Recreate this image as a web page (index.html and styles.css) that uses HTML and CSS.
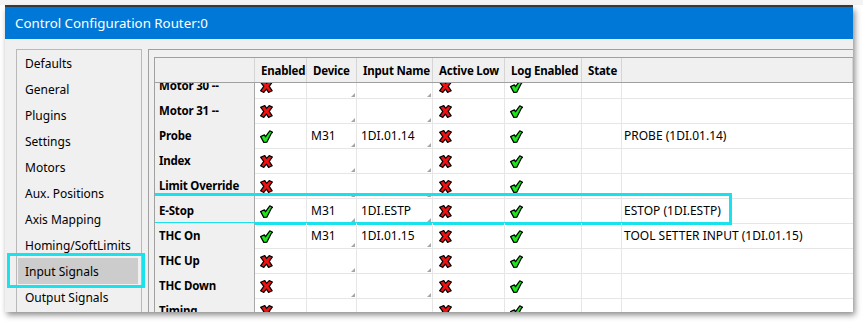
FILE: index.html
```html
<!DOCTYPE html>
<html lang="en">

<head>
   <meta charset="UTF-8">
   <title>Control Configuration Router:0</title>
   <link rel="stylesheet" href="styles.css">
</head>

<body>
   <svg class="defs" width="0" height="0">
      <defs>
         <symbol id="icon-no" viewBox="0 0 13 13">
            <path d="M0.6 2.2 L4.8 0.6 L6.6 3.4 L9.2 0.6 L12.4 2 L9.2 6.4 L12.2 10.8 L8.6 12.4 L6.4 9.2 L3.8 12.4 L0.6 10.8 L3.8 6.4 Z" fill="#ee1111" stroke="#000" stroke-width="1.2" stroke-linejoin="round"/>
         </symbol>
         <symbol id="icon-yes" viewBox="0 0 13 13">
            <path d="M0.6 6.6 L4.4 4.8 L5.4 6.8 L9.8 0.8 L12.6 2.2 L11.4 3.2 L6.8 12.2 L3.8 12.4 Z" fill="#1fe31f" stroke="#000" stroke-width="1.2" stroke-linejoin="round"/>
         </symbol>
      </defs>
   </svg>

   <div class="backdrop"></div>
   <div class="backdrop-edge"></div>

   <div class="window">
      <div class="title-bar">Control Configuration Router:0</div>

      <div class="content">
         <!-- left page list -->
         <ul class="nav">
            <li class="nav-item">Defaults</li>
            <li class="nav-item">General</li>
            <li class="nav-item">Plugins</li>
            <li class="nav-item">Settings</li>
            <li class="nav-item">Motors</li>
            <li class="nav-item">Aux. Positions</li>
            <li class="nav-item">Axis Mapping</li>
            <li class="nav-item">Homing/SoftLimits</li>
            <li class="nav-item selected">Input Signals</li>
            <li class="nav-item">Output Signals</li>
         </ul>

         <div class="panel">
            <div class="grid">
               <div class="grid-head">
                  <div class="hcell"></div>
                  <div class="hcell">Enabled</div>
                  <div class="hcell">Device</div>
                  <div class="hcell">Input Name</div>
                  <div class="hcell">Active Low</div>
                  <div class="hcell">Log Enabled</div>
                  <div class="hcell">State</div>
                  <div class="hcell"></div>
               </div>

               <div class="grid-body">
                  <div class="rows">
                     <div class="row">
                        <div class="rhead">Motor 30 --</div>
                        <div class="cell icon"><svg><use href="#icon-no"/></svg></div>
                        <div class="cell combo"></div>
                        <div class="cell combo"></div>
                        <div class="cell icon wide"><svg><use href="#icon-no"/></svg></div>
                        <div class="cell icon"><svg><use href="#icon-yes"/></svg></div>
                        <div class="cell"></div>
                        <div class="cell desc"></div>
                     </div>
                     <div class="row">
                        <div class="rhead">Motor 31 --</div>
                        <div class="cell icon"><svg><use href="#icon-no"/></svg></div>
                        <div class="cell combo"></div>
                        <div class="cell combo"></div>
                        <div class="cell icon wide"><svg><use href="#icon-no"/></svg></div>
                        <div class="cell icon"><svg><use href="#icon-yes"/></svg></div>
                        <div class="cell"></div>
                        <div class="cell desc"></div>
                     </div>
                     <div class="row">
                        <div class="rhead">Probe</div>
                        <div class="cell icon"><svg><use href="#icon-yes"/></svg></div>
                        <div class="cell combo">M31</div>
                        <div class="cell combo">1DI.01.14</div>
                        <div class="cell icon wide"><svg><use href="#icon-no"/></svg></div>
                        <div class="cell icon"><svg><use href="#icon-yes"/></svg></div>
                        <div class="cell"></div>
                        <div class="cell desc">PROBE (1DI.01.14)</div>
                     </div>
                     <div class="row">
                        <div class="rhead">Index</div>
                        <div class="cell icon"><svg><use href="#icon-no"/></svg></div>
                        <div class="cell combo"></div>
                        <div class="cell combo"></div>
                        <div class="cell icon wide"><svg><use href="#icon-no"/></svg></div>
                        <div class="cell icon"><svg><use href="#icon-yes"/></svg></div>
                        <div class="cell"></div>
                        <div class="cell desc"></div>
                     </div>
                     <div class="row">
                        <div class="rhead">Limit Override</div>
                        <div class="cell icon"><svg><use href="#icon-no"/></svg></div>
                        <div class="cell combo"></div>
                        <div class="cell combo"></div>
                        <div class="cell icon wide"><svg><use href="#icon-no"/></svg></div>
                        <div class="cell icon"><svg><use href="#icon-yes"/></svg></div>
                        <div class="cell"></div>
                        <div class="cell desc"></div>
                     </div>
                     <div class="row marked">
                        <div class="rhead">E-Stop</div>
                        <div class="cell icon"><svg><use href="#icon-yes"/></svg></div>
                        <div class="cell combo">M31</div>
                        <div class="cell combo">1DI.ESTP</div>
                        <div class="cell icon wide"><svg><use href="#icon-no"/></svg></div>
                        <div class="cell icon"><svg><use href="#icon-yes"/></svg></div>
                        <div class="cell"></div>
                        <div class="cell desc">ESTOP (1DI.ESTP)</div>
                     </div>
                     <div class="row">
                        <div class="rhead">THC On</div>
                        <div class="cell icon"><svg><use href="#icon-yes"/></svg></div>
                        <div class="cell combo">M31</div>
                        <div class="cell combo">1DI.01.15</div>
                        <div class="cell icon wide"><svg><use href="#icon-no"/></svg></div>
                        <div class="cell icon"><svg><use href="#icon-yes"/></svg></div>
                        <div class="cell"></div>
                        <div class="cell desc">TOOL SETTER INPUT (1DI.01.15)</div>
                     </div>
                     <div class="row">
                        <div class="rhead">THC Up</div>
                        <div class="cell icon"><svg><use href="#icon-no"/></svg></div>
                        <div class="cell combo"></div>
                        <div class="cell combo"></div>
                        <div class="cell icon wide"><svg><use href="#icon-no"/></svg></div>
                        <div class="cell icon"><svg><use href="#icon-yes"/></svg></div>
                        <div class="cell"></div>
                        <div class="cell desc"></div>
                     </div>
                     <div class="row">
                        <div class="rhead">THC Down</div>
                        <div class="cell icon"><svg><use href="#icon-no"/></svg></div>
                        <div class="cell combo"></div>
                        <div class="cell combo"></div>
                        <div class="cell icon wide"><svg><use href="#icon-no"/></svg></div>
                        <div class="cell icon"><svg><use href="#icon-yes"/></svg></div>
                        <div class="cell"></div>
                        <div class="cell desc"></div>
                     </div>
                     <div class="row">
                        <div class="rhead">Timing</div>
                        <div class="cell icon"><svg><use href="#icon-no"/></svg></div>
                        <div class="cell combo"></div>
                        <div class="cell combo"></div>
                        <div class="cell icon wide"><svg><use href="#icon-no"/></svg></div>
                        <div class="cell icon"><svg><use href="#icon-yes"/></svg></div>
                        <div class="cell"></div>
                        <div class="cell desc"></div>
                     </div>
                  </div>
               </div>
            </div>
         </div>
      </div>
   </div>
</body>

</html>
```

FILE: styles.css
```css
* {
   margin: 0;
   padding: 0;
   box-sizing: border-box;
}

body {
   width: 863px;
   height: 322px;
   overflow: hidden;
   background: #ffffff;
   color: #000000;
   font-family: "Noto Sans", "Open Sans", sans-serif;
   font-size: 12px;
}

.defs {
   position: absolute;
}

/* window behind the dialog */
.backdrop {
   height: 5px;
   background: #f3f3f3;
}

.backdrop-edge {
   height: 2px;
   width: 848px;
   margin-left: 5px;
   background: #3b3b3b;
}

.window {
   width: 848px;
   height: 305px;
   margin-left: 5px;
   background: #f0f0f0;
   box-shadow: 2px 3px 6px rgba(0, 0, 0, 0.45);
   display: flex;
   flex-direction: column;
   overflow: hidden;
}

.title-bar {
   flex-shrink: 0;
   height: 32px;
   line-height: 32px;
   padding-left: 10px;
   background: #0078d7;
   color: #ffffff;
   font-size: 13.3px;
}

.content {
   flex: 1;
   min-height: 0;
   display: flex;
   padding: 10px 0 0 11px;
}

/* page list */
.nav {
   flex-shrink: 0;
   width: 126px;
   list-style: none;
   border: 1px solid #b9b9b9;
   border-bottom: none;
   background: #f0f0f0;
}

.nav-item {
   position: relative;
   height: 26px;
   line-height: 27px;
   padding-left: 8px;
   white-space: nowrap;
}

.nav-item.selected {
   margin: 0 3px 0 1px;
   padding-left: 7px;
   background: #cccccc;
}

.nav-item.selected::after {
   content: "";
   position: absolute;
   left: -11px;
   top: -5px;
   right: -7px;
   bottom: -4px;
   border: 3px solid #1ae2ec;
}

/* grid panel */
.panel {
   flex: 1;
   min-width: 0;
   margin-left: 6px;
   padding: 7px 0 0 5px;
   border-left: 1px solid #a0a0a0;
   border-top: 1px solid #a0a0a0;
}

.grid {
   height: 100%;
   display: flex;
   flex-direction: column;
   border-left: 1px solid #a0a0a0;
   border-top: 1px solid #a0a0a0;
}

.grid-head,
.row {
   display: grid;
   grid-template-columns: 100px 52px 50px 76px 72px 77px 40px 1fr;
}

.grid-head {
   flex-shrink: 0;
   height: 25px;
   border-bottom: 1px solid #a0a0a0;
   background: #f0f0f0;
}

.hcell {
   padding: 1px 0 0 6px;
   line-height: 24px;
   font-size: 11.5px;
   font-weight: bold;
   letter-spacing: -0.2px;
   white-space: nowrap;
   overflow: hidden;
   border-right: 1px solid #d5d5d5;
}

.grid-body {
   flex: 1;
   min-height: 0;
   overflow: hidden;
   background: #ffffff;
}

/* list is scrolled by 10px */
.rows {
   margin-top: -10px;
}

.row {
   position: relative;
   height: 25px;
}

.rhead {
   padding: 1px 0 0 4px;
   line-height: 24px;
   font-size: 11.5px;
   font-weight: bold;
   letter-spacing: -0.2px;
   white-space: nowrap;
   background: #f0f0f0;
   border-right: 1px solid #a8a8a8;
   border-bottom: 1px solid #d5d5d5;
}

.cell {
   position: relative;
   padding: 1px 0 0 4px;
   line-height: 24px;
   white-space: nowrap;
   border-right: 1px solid #e6e6e6;
   border-bottom: 1px solid #e6e6e6;
}

.cell.icon {
   display: flex;
   align-items: center;
   padding: 1px 0 0 5px;
}

.cell.icon.wide {
   padding-left: 6px;
}

.cell svg {
   width: 13px;
   height: 13px;
}

.cell.desc {
   padding-left: 2px;
   border-right: none;
}

.combo::after {
   content: "";
   position: absolute;
   right: 1px;
   bottom: 1px;
   border-style: solid;
   border-width: 0 0 4px 4px;
   border-color: transparent transparent #a6a6a6 transparent;
}

.row.marked::after {
   content: "";
   position: absolute;
   left: -4px;
   top: -5px;
   width: 575px;
   bottom: -2px;
   border: 3px solid #1ae2ec;
   pointer-events: none;
}
```
